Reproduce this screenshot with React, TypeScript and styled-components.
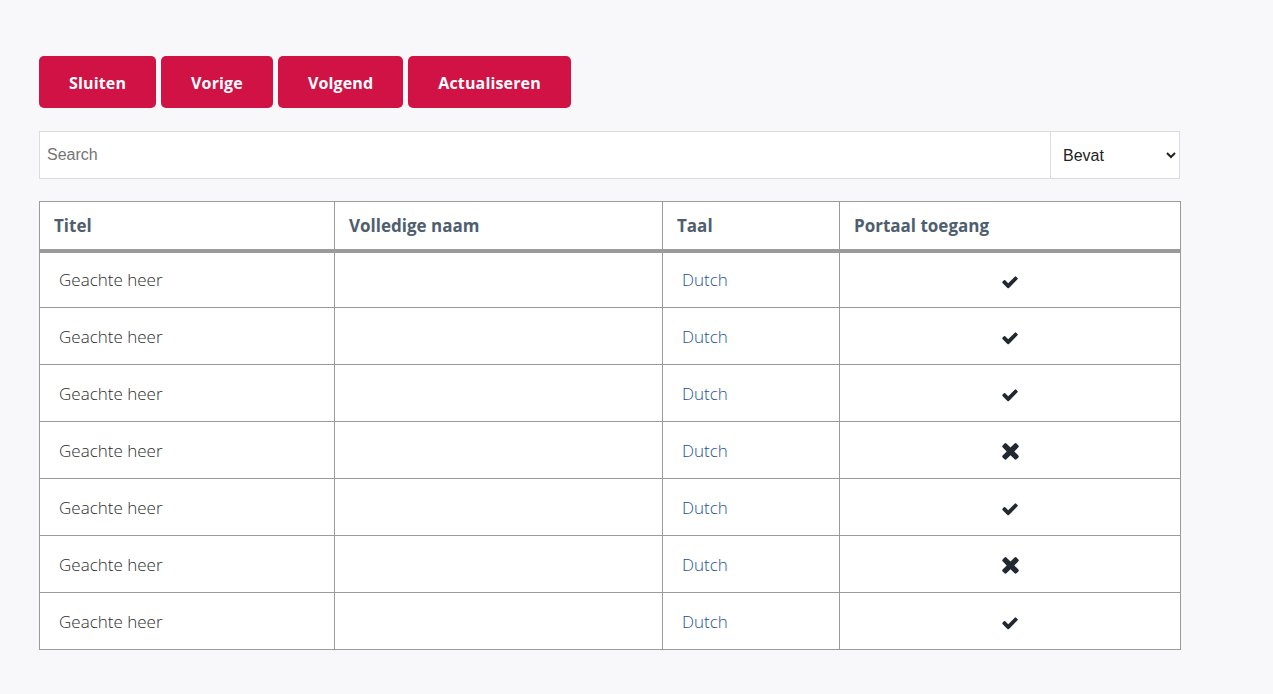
import React from "react";
import styled, { createGlobalStyle } from "styled-components";

const Global = createGlobalStyle`
  html, body { margin: 0; padding: 0; background: #f8f8fa; }
  body { font-family: "Open Sans", "Liberation Sans", sans-serif; }
  * { box-sizing: border-box; }
`;

const Page = styled.div`
  padding: 56px 93px 40px 39px;
`;

const Toolbar = styled.div`
  display: flex;
  gap: 5px;
`;

const Button = styled.button`
  height: 52px;
  padding: 0 30px;
  border: none;
  border-radius: 5px;
  background: #d01244;
  color: #fff;
  font-family: "Open Sans", sans-serif;
  font-weight: 700;
  font-size: 16px;
  letter-spacing: 0.15px;
  padding-top: 2px;
  cursor: pointer;
`;

const SearchRow = styled.div`
  display: flex;
  margin-top: 23px;
  height: 48px;
  border: 1px solid #dcdcdc;
  background: #fff;
`;

const SearchInput = styled.input`
  flex: 1;
  border: none;
  outline: none;
  padding: 0 7px;
  font-family: "Liberation Sans", Arial, sans-serif;
  font-size: 16px;
  color: #333;
  background: #fff;
  &::placeholder { color: #757575; }
`;

const Select = styled.select`
  width: 129px;
  border: none;
  border-left: 1px solid #dcdcdc;
  padding: 0 4px 0 8px;
  font-family: "Liberation Sans", Arial, sans-serif;
  font-size: 16px;
  color: #222;
  background: #fff;
  outline: none;
`;

const Table = styled.table`
  margin-top: 22px;
  width: 100%;
  border-collapse: collapse;
  background: #fff;
  border: 1px solid #9b9b9b;
  table-layout: fixed;
`;

const Th = styled.th<{ $w: number }>`
  width: ${(p) => p.$w}px;
  height: 49px;
  padding: 0 14px;
  text-align: left;
  font-weight: 700;
  font-size: 17px;
  color: #4e5e6f;
  border: 1px solid #9b9b9b;
  border-bottom: 4px solid #9b9b9b;
`;

const Td = styled.td<{ $tone?: "blue" | "dark"; $center?: boolean }>`
  height: 57px;
  padding: 0 19px;
  font-weight: 300;
  font-size: 17px;
  color: ${(p) => (p.$tone === "blue" ? "#1d5290" : "#2b2b2b")};
  text-align: ${(p) => (p.$center ? "center" : "left")};
  border: 1px solid #9b9b9b;
  vertical-align: middle;
`;

const IconWrap = styled.span`
  display: inline-flex;
  vertical-align: middle;
  color: #222831;
`;

const Check = () => (
  <IconWrap>
    <svg width="18" height="18" viewBox="0 0 1792 1792" fill="currentColor">
      <path d="M1671 566q0 40-28 68l-724 724-136 136q-28 28-68 28t-68-28l-136-136-362-362q-28-28-28-68t28-68l136-136q28-28 68-28t68 28l294 295 656-657q28-28 68-28t68 28l136 136q28 28 28 68z" />
    </svg>
  </IconWrap>
);

const Cross = () => (
  <IconWrap>
    <svg width="25" height="25" viewBox="0 0 1792 1792" fill="currentColor">
      <path d="M1490 1322q0 40-28 68l-136 136q-28 28-68 28t-68-28l-294-294-294 294q-28 28-68 28t-68-28l-136-136q-28-28-28-68t28-68l294-294-294-294q-28-28-28-68t28-68l136-136q28-28 68-28t68 28l294 294 294-294q28-28 68-28t68 28l136 136q28 28 28 68t-28 68l-294 294 294 294q28 28 28 68z" />
    </svg>
  </IconWrap>
);

const rows = [true, true, true, false, true, false, true];

export default function App() {
  return (
    <>
      <Global />
      <Page>
        <Toolbar>
          <Button>Sluiten</Button>
          <Button>Vorige</Button>
          <Button>Volgend</Button>
          <Button>Actualiseren</Button>
        </Toolbar>
        <SearchRow>
          <SearchInput placeholder="Search" />
          <Select defaultValue="Bevat">
            <option>Bevat</option>
          </Select>
        </SearchRow>
        <Table>
          <thead>
            <tr>
              <Th $w={295}>Titel</Th>
              <Th $w={328}>Volledige naam</Th>
              <Th $w={177}>Taal</Th>
              <Th $w={341}>Portaal toegang</Th>
            </tr>
          </thead>
          <tbody>
            {rows.map((ok, i) => (
              <tr key={i}>
                <Td>Geachte heer</Td>
                <Td></Td>
                <Td $tone="blue">Dutch</Td>
                <Td $center>{ok ? <Check /> : <Cross />}</Td>
              </tr>
            ))}
          </tbody>
        </Table>
      </Page>
    </>
  );
}
